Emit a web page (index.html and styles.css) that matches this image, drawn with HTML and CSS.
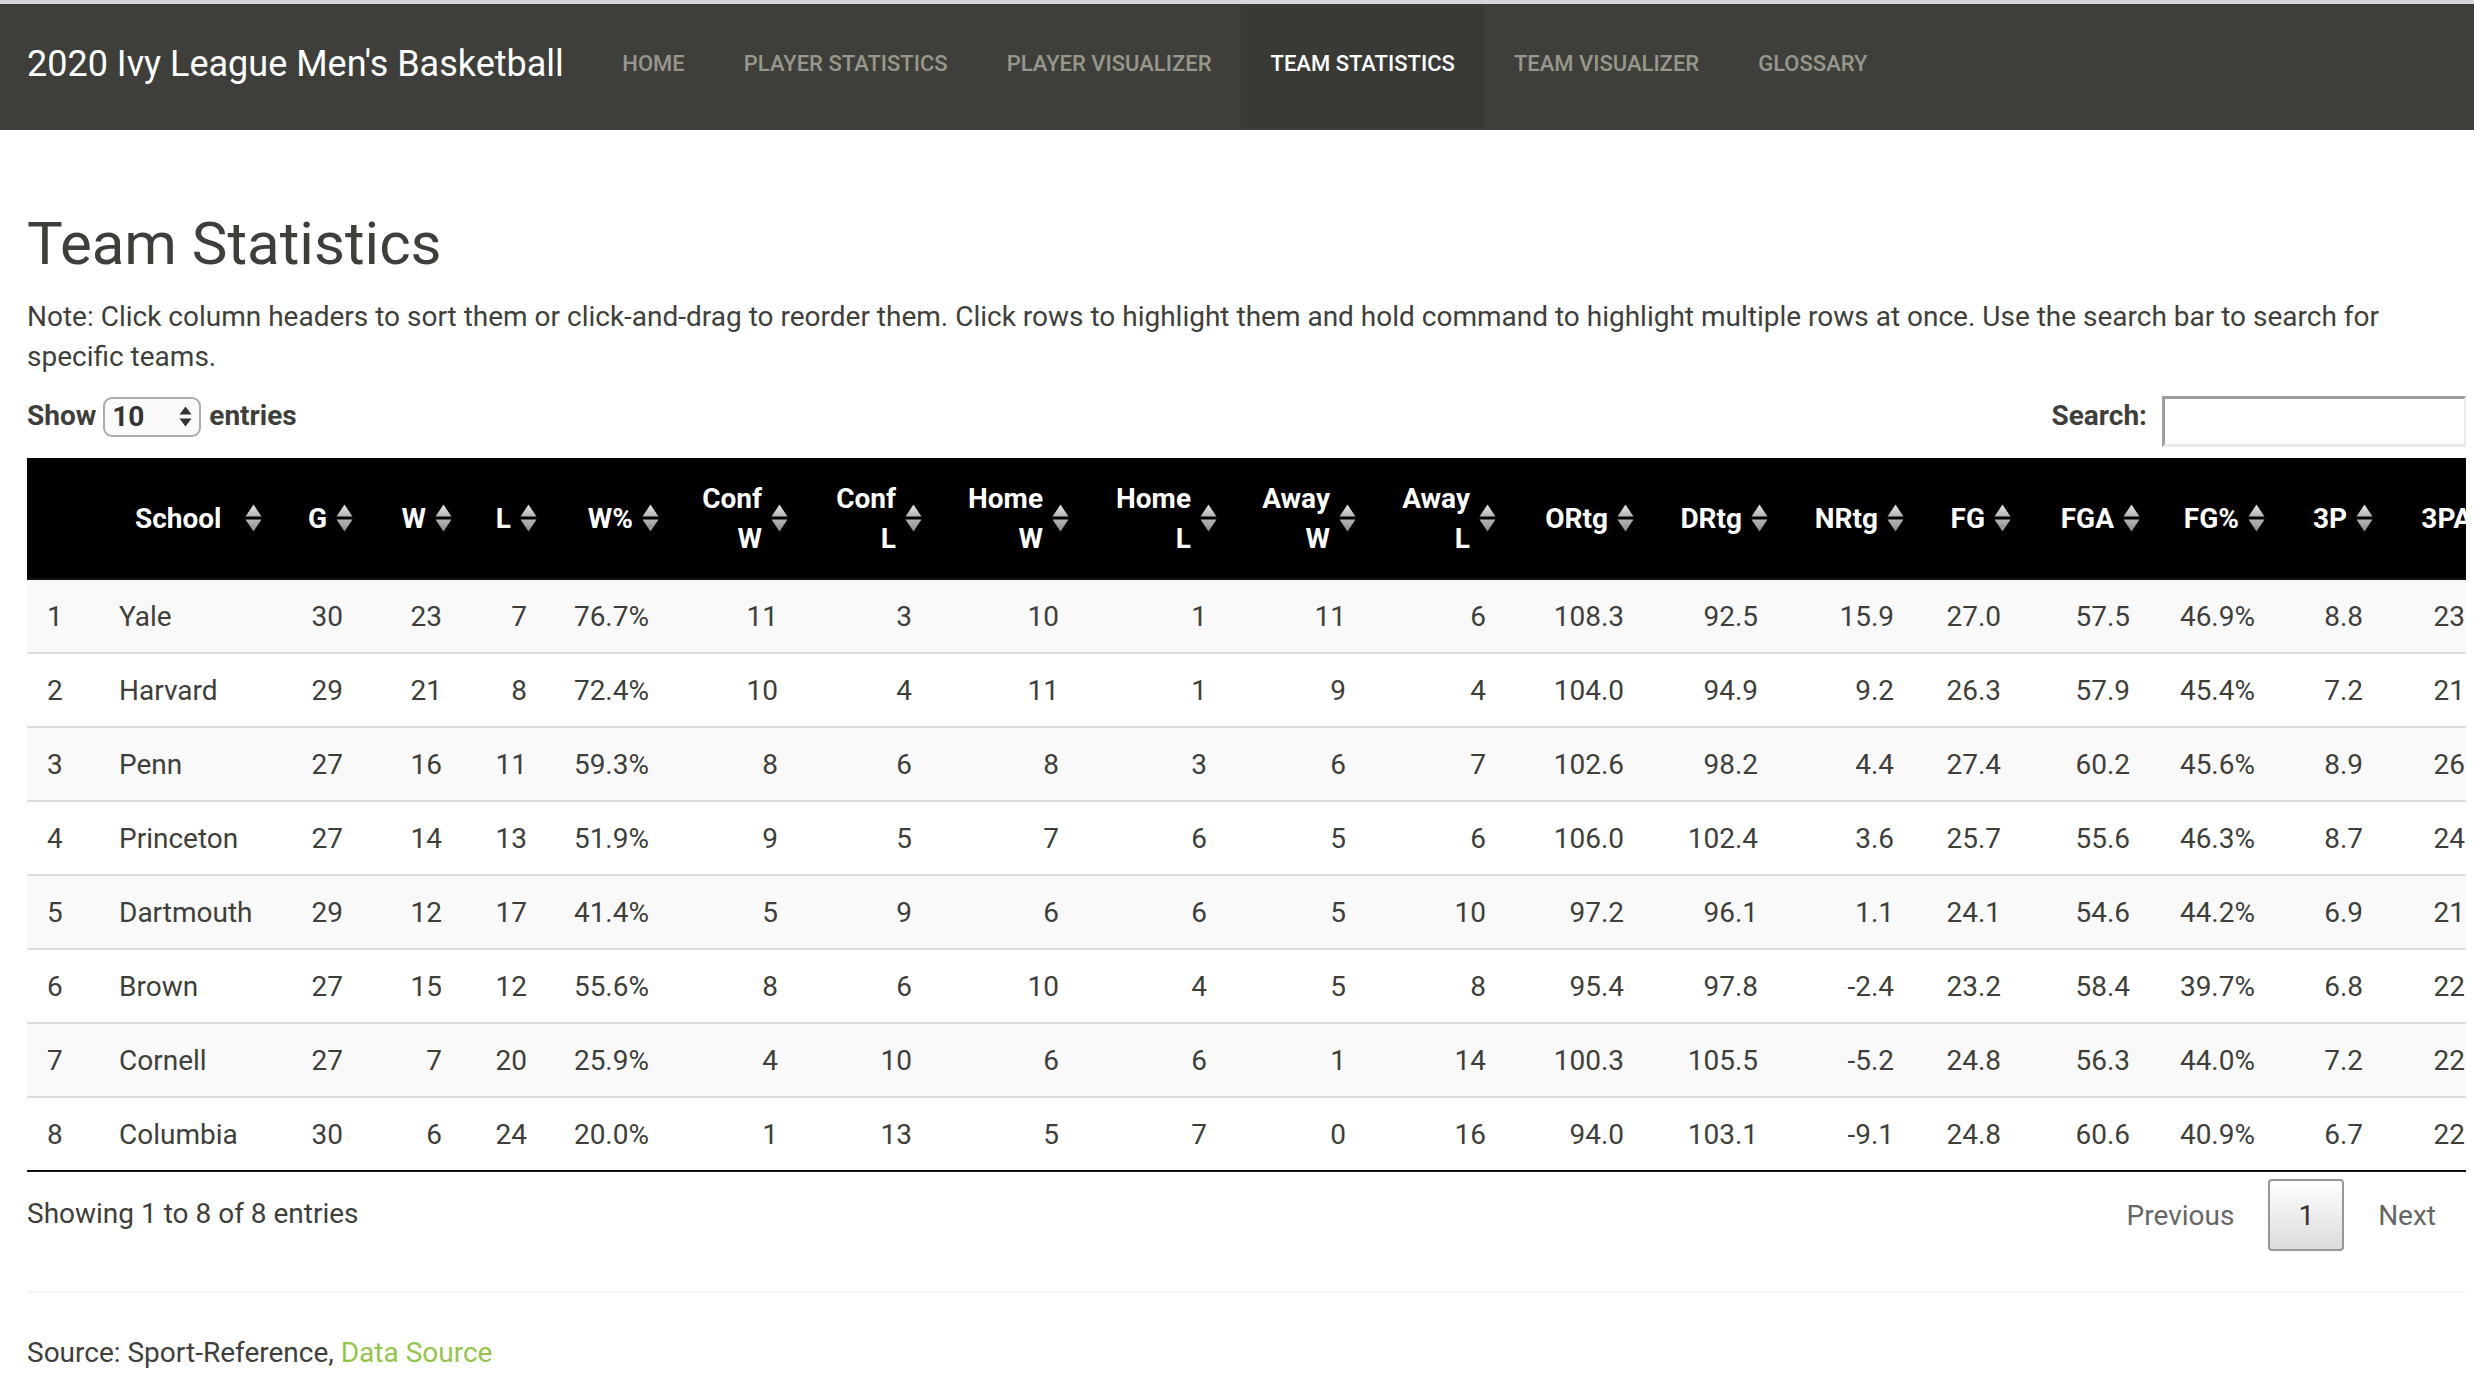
FILE: index.html
```html
<!DOCTYPE html>
<html lang="en">
<head>
<meta charset="utf-8">
<title>Team Statistics</title>
<link rel="stylesheet" href="styles.css">
</head>
<body>
<nav class="navbar">
  <span class="brand">2020 Ivy League Men's Basketball</span>
  <ul class="nav">
    <li><a href="#">Home</a></li>
    <li><a href="#">Player Statistics</a></li>
    <li><a href="#">Player Visualizer</a></li>
    <li class="active"><a href="#">Team Statistics</a></li>
    <li><a href="#">Team Visualizer</a></li>
    <li><a href="#">Glossary</a></li>
  </ul>
</nav>
<main class="page">
  <h2 class="title">Team Statistics</h2>
  <p class="note">Note: Click column headers to sort them or click-and-drag to reorder them. Click rows to highlight them and hold command to highlight multiple rows at once. Use the search bar to search for specific teams.</p>
  <div class="controls">
    <label class="length">Show <span class="select"><span class="select-val">10</span><svg class="select-arrows" viewBox="0 0 13 21"><path d="M0.5 8.5 L6.5 0.5 L12.5 8.5 Z" fill="#333"/><path d="M0.5 12.5 L6.5 20.5 L12.5 12.5 Z" fill="#333"/></svg></span> entries</label>
    <label class="filter">Search: <input class="search" type="search"></label>
  </div>
  <div class="scroll">
    <table class="dt">
      <colgroup>
        <col class="c72"><col class="c173"><col class="c91"><col class="c99"><col class="c85"><col class="c122"><col class="c129"><col class="c134"><col class="c147"><col class="c148"><col class="c139"><col class="c140"><col class="c138"><col class="c134"><col class="c136"><col class="c107"><col class="c129"><col class="c125"><col class="c108"><col class="c125">
      </colgroup>
      <thead>
        <tr>
          <th class="idx"></th>
          <th><div class="th-in left"><span class="lbl">School</span><svg class="sort" viewBox="0 0 19 30"><use href="#sorticon"/></svg></div></th>
          <th><div class="th-in"><span class="lbl">G</span><svg class="sort" viewBox="0 0 19 30"><use href="#sorticon"/></svg></div></th>
          <th><div class="th-in"><span class="lbl">W</span><svg class="sort" viewBox="0 0 19 30"><use href="#sorticon"/></svg></div></th>
          <th><div class="th-in"><span class="lbl">L</span><svg class="sort" viewBox="0 0 19 30"><use href="#sorticon"/></svg></div></th>
          <th><div class="th-in"><span class="lbl">W%</span><svg class="sort" viewBox="0 0 19 30"><use href="#sorticon"/></svg></div></th>
          <th><div class="th-in"><span class="lbl">Conf<br>W</span><svg class="sort" viewBox="0 0 19 30"><use href="#sorticon"/></svg></div></th>
          <th><div class="th-in"><span class="lbl">Conf<br>L</span><svg class="sort" viewBox="0 0 19 30"><use href="#sorticon"/></svg></div></th>
          <th><div class="th-in"><span class="lbl">Home<br>W</span><svg class="sort" viewBox="0 0 19 30"><use href="#sorticon"/></svg></div></th>
          <th><div class="th-in"><span class="lbl">Home<br>L</span><svg class="sort" viewBox="0 0 19 30"><use href="#sorticon"/></svg></div></th>
          <th><div class="th-in"><span class="lbl">Away<br>W</span><svg class="sort" viewBox="0 0 19 30"><use href="#sorticon"/></svg></div></th>
          <th><div class="th-in"><span class="lbl">Away<br>L</span><svg class="sort" viewBox="0 0 19 30"><use href="#sorticon"/></svg></div></th>
          <th><div class="th-in"><span class="lbl">ORtg</span><svg class="sort" viewBox="0 0 19 30"><use href="#sorticon"/></svg></div></th>
          <th><div class="th-in"><span class="lbl">DRtg</span><svg class="sort" viewBox="0 0 19 30"><use href="#sorticon"/></svg></div></th>
          <th><div class="th-in"><span class="lbl">NRtg</span><svg class="sort" viewBox="0 0 19 30"><use href="#sorticon"/></svg></div></th>
          <th><div class="th-in"><span class="lbl">FG</span><svg class="sort" viewBox="0 0 19 30"><use href="#sorticon"/></svg></div></th>
          <th><div class="th-in"><span class="lbl">FGA</span><svg class="sort" viewBox="0 0 19 30"><use href="#sorticon"/></svg></div></th>
          <th><div class="th-in"><span class="lbl">FG%</span><svg class="sort" viewBox="0 0 19 30"><use href="#sorticon"/></svg></div></th>
          <th><div class="th-in"><span class="lbl">3P</span><svg class="sort" viewBox="0 0 19 30"><use href="#sorticon"/></svg></div></th>
          <th><div class="th-in"><span class="lbl">3PA</span><svg class="sort" viewBox="0 0 19 30"><use href="#sorticon"/></svg></div></th>
        </tr>
      </thead>
      <tbody>
        <tr><td class="l">1</td><td class="l">Yale</td><td>30</td><td>23</td><td>7</td><td>76.7%</td><td>11</td><td>3</td><td>10</td><td>1</td><td>11</td><td>6</td><td>108.3</td><td>92.5</td><td>15.9</td><td>27.0</td><td>57.5</td><td>46.9%</td><td>8.8</td><td>23.5</td></tr>
        <tr><td class="l">2</td><td class="l">Harvard</td><td>29</td><td>21</td><td>8</td><td>72.4%</td><td>10</td><td>4</td><td>11</td><td>1</td><td>9</td><td>4</td><td>104.0</td><td>94.9</td><td>9.2</td><td>26.3</td><td>57.9</td><td>45.4%</td><td>7.2</td><td>21.8</td></tr>
        <tr><td class="l">3</td><td class="l">Penn</td><td>27</td><td>16</td><td>11</td><td>59.3%</td><td>8</td><td>6</td><td>8</td><td>3</td><td>6</td><td>7</td><td>102.6</td><td>98.2</td><td>4.4</td><td>27.4</td><td>60.2</td><td>45.6%</td><td>8.9</td><td>26.1</td></tr>
        <tr><td class="l">4</td><td class="l">Princeton</td><td>27</td><td>14</td><td>13</td><td>51.9%</td><td>9</td><td>5</td><td>7</td><td>6</td><td>5</td><td>6</td><td>106.0</td><td>102.4</td><td>3.6</td><td>25.7</td><td>55.6</td><td>46.3%</td><td>8.7</td><td>24.9</td></tr>
        <tr><td class="l">5</td><td class="l">Dartmouth</td><td>29</td><td>12</td><td>17</td><td>41.4%</td><td>5</td><td>9</td><td>6</td><td>6</td><td>5</td><td>10</td><td>97.2</td><td>96.1</td><td>1.1</td><td>24.1</td><td>54.6</td><td>44.2%</td><td>6.9</td><td>21.6</td></tr>
        <tr><td class="l">6</td><td class="l">Brown</td><td>27</td><td>15</td><td>12</td><td>55.6%</td><td>8</td><td>6</td><td>10</td><td>4</td><td>5</td><td>8</td><td>95.4</td><td>97.8</td><td>-2.4</td><td>23.2</td><td>58.4</td><td>39.7%</td><td>6.8</td><td>22.1</td></tr>
        <tr><td class="l">7</td><td class="l">Cornell</td><td>27</td><td>7</td><td>20</td><td>25.9%</td><td>4</td><td>10</td><td>6</td><td>6</td><td>1</td><td>14</td><td>100.3</td><td>105.5</td><td>-5.2</td><td>24.8</td><td>56.3</td><td>44.0%</td><td>7.2</td><td>22.8</td></tr>
        <tr><td class="l">8</td><td class="l">Columbia</td><td>30</td><td>6</td><td>24</td><td>20.0%</td><td>1</td><td>13</td><td>5</td><td>7</td><td>0</td><td>16</td><td>94.0</td><td>103.1</td><td>-9.1</td><td>24.8</td><td>60.6</td><td>40.9%</td><td>6.7</td><td>22.4</td></tr>
      </tbody>
    </table>
  </div>
  <div class="dt-footer">
    <div class="info">Showing 1 to 8 of 8 entries</div>
    <div class="paginate">
      <a class="pbtn disabled">Previous</a>
      <a class="pbtn current">1</a>
      <a class="pbtn disabled">Next</a>
    </div>
  </div>
  <hr class="sep">
  <p class="source">Source: Sport-Reference, <a href="#">Data Source</a></p>
</main>
<svg class="defs" width="0" height="0">
  <defs>
    <linearGradient id="gup" x1="0" y1="0" x2="0" y2="1">
      <stop offset="0" stop-color="#e6e6e6"/>
      <stop offset="1" stop-color="#b4b4b4"/>
    </linearGradient>
    <linearGradient id="gdn" x1="0" y1="0" x2="0" y2="1">
      <stop offset="0" stop-color="#b4b4b4"/>
      <stop offset="1" stop-color="#8c8c8c"/>
    </linearGradient>
    <g id="sorticon">
      <path d="M1.5 13.5 L9.5 1.5 L17.5 13.5 Z" fill="url(#gup)"/>
      <path d="M1.5 16.5 L9.5 28.5 L17.5 16.5 Z" fill="url(#gdn)"/>
    </g>
  </defs>
</svg>
</body>
</html>
```

FILE: styles.css
```css
* { box-sizing: border-box; }
html, body { margin: 0; padding: 0; background: #fff; }
body {
  font-family: Roboto, "Helvetica Neue", Arial, sans-serif;
  font-size: 28px;
  line-height: 40px;
  color: #3e3f3a;
  border-top: 4px solid #d6d6da;
}
.defs { position: absolute; width: 0; height: 0; overflow: hidden; }

/* navbar */
.navbar {
  display: flex;
  align-items: flex-start;
  height: 126px;
  background: #3e3f3a;
  padding-left: 27px;
}
.brand {
  display: block;
  height: 120px;
  padding: 40px 30px 40px 0;
  font-size: 36px;
  line-height: 40px;
  color: #fff;
  white-space: nowrap;
}
.nav { display: flex; list-style: none; margin: 0 0 0 -1px; padding: 0; }
.nav a {
  display: block;
  height: 124px;
  padding: 40px 29.5px 44px;
  font-size: 22px;
  line-height: 40px;
  font-weight: 500;
  color: #98978b;
  text-transform: uppercase;
  text-decoration: none;
  white-space: nowrap;
}
.nav .active a { background: #393a35; color: #fff; }

/* page */
.page { padding: 0 8px 0 27px; }
.title {
  font-size: 60px;
  line-height: 66px;
  font-weight: 400;
  margin: 81px 0 19px;
}
.note { margin: 0 0 19px; padding-top: 1px; }

.controls {
  display: flex;
  justify-content: space-between;
  align-items: flex-start;
  height: 62px;
}
.length { display: flex; align-items: center; height: 40px; font-weight: 700; }
.select {
  display: flex;
  align-items: center;
  justify-content: space-between;
  width: 98px;
  height: 40px;
  margin: 1px 8px 0 7px;
  padding: 0 7px 0 7px;
  border: 2px solid #ababab;
  border-radius: 9px;
  background: #fafafa;
}
.select-val { font-weight: 700; color: #333; }
.select-arrows { width: 13px; height: 21px; }
.filter { display: flex; align-items: flex-start; font-weight: 700; }
.search {
  width: 304px;
  height: 51px;
  margin-left: 15px;
  border-style: solid;
  border-width: 3px 2px 3px 3px;
  border-color: #9b9b9b #e9e9e9 #e9e9e9 #9b9b9b;
  background: #fff;
  font: inherit;
}

/* table */
.scroll { overflow: hidden; width: 100%; }
.dt {
  border-collapse: separate;
  border-spacing: 0;
  table-layout: fixed;
  width: 2481px;
  border-bottom: 2px solid #111;
}
.c72 { width: 72px; } .c173 { width: 173px; } .c91 { width: 91px; } .c99 { width: 99px; }
.c85 { width: 85px; } .c122 { width: 122px; } .c129 { width: 129px; } .c134 { width: 134px; }
.c147 { width: 147px; } .c148 { width: 148px; } .c139 { width: 139px; } .c140 { width: 140px; }
.c138 { width: 138px; } .c136 { width: 136px; } .c107 { width: 107px; } .c125 { width: 125px; }
.c108 { width: 108px; }
.dt th {
  background: #000;
  color: #fff;
  font-weight: 700;
  padding: 21px 9px 19px 36px;
  border-bottom: 2px solid #111;
  vertical-align: middle;
  text-align: right;
  white-space: nowrap;
}
.dt th.idx { padding: 20px; }
.th-in { display: flex; align-items: center; justify-content: flex-end; }
.th-in.left { justify-content: space-between; }
.lbl { text-align: right; }
.sort { width: 19px; height: 30px; margin-left: 8px; flex: none; margin-top: -2px; }
.dt td {
  padding: 17px 20px 15px;
  border-top: 2px solid #ddd;
  text-align: right;
  white-space: nowrap;
}
.dt td.l { text-align: left; }
.dt tbody tr:first-child td { border-top: 0; }
.dt tbody tr:nth-child(odd) td { background: #f9f9f9; }

/* footer */
.dt-footer { display: flex; justify-content: space-between; align-items: flex-start; }
.info { padding-top: 22px; }
.paginate { display: flex; padding-top: 7px; }
.pbtn {
  display: block;
  min-width: 42px;
  padding: 15px 28px 13px;
  margin-left: 4px;
  border: 2px solid transparent;
  border-radius: 4px;
  color: #666;
  line-height: 40px;
  text-align: center;
}
.pbtn.current {
  color: #333;
  border-color: #979797;
  background: linear-gradient(#fff 0%, #dcdcdc 100%);
}
.sep { border: 0; border-top: 2px solid #f8f5f0; margin: 40px 0 40px; }
.source { margin: 0; }
.source a { color: #93c54b; text-decoration: none; }
```
